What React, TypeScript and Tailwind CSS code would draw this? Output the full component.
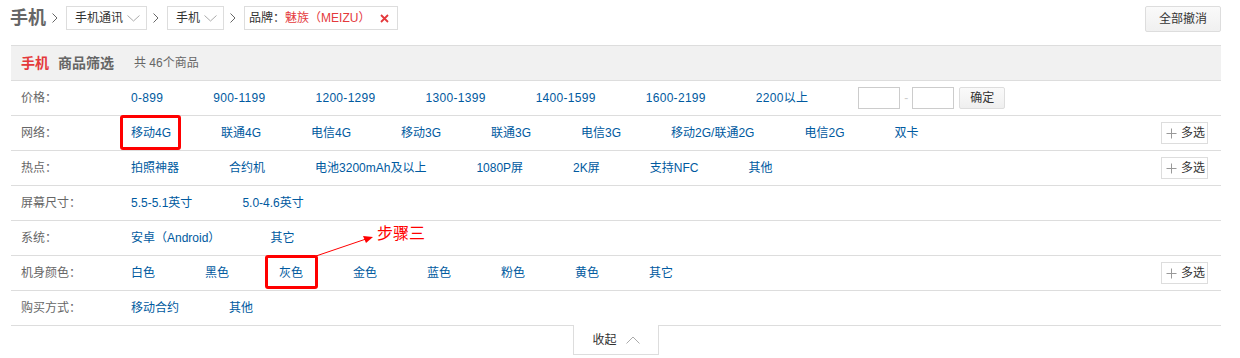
import React from 'react'

const font = "font-['Liberation_Sans','Noto_Sans_CJK_SC',sans-serif]"

type Item = { text: string; boxed?: 'net' | 'color' }
type Row = { label: string; items: Item[]; multi?: boolean; price?: boolean }

const rows: Row[] = [
    { label: '价格：', price: true, items: ['0-899', '900-1199', '1200-1299', '1300-1399', '1400-1599', '1600-2199', '2200以上'].map((t) => ({ text: t })) },
    {
        label: '网络：',
        multi: true,
        items: [{ text: '移动4G', boxed: 'net' }, ...['联通4G', '电信4G', '移动3G', '联通3G', '电信3G', '移动2G/联通2G', '电信2G', '双卡'].map((t) => ({ text: t }))],
    },
    { label: '热点：', multi: true, items: ['拍照神器', '合约机', '电池3200mAh及以上', '1080P屏', '2K屏', '支持NFC', '其他'].map((t) => ({ text: t })) },
    { label: '屏幕尺寸：', items: ['5.5-5.1英寸', '5.0-4.6英寸'].map((t) => ({ text: t })) },
    { label: '系统：', items: ['安卓（Android）', '其它'].map((t) => ({ text: t })) },
    {
        label: '机身颜色：',
        multi: true,
        items: [{ text: '白色' }, { text: '黑色' }, { text: '灰色', boxed: 'color' }, ...['金色', '蓝色', '粉色', '黄色', '其它'].map((t) => ({ text: t }))],
    },
    { label: '购买方式：', items: ['移动合约', '其他'].map((t) => ({ text: t })) },
]

function Sep() {
    return (
        <svg width="6" height="10" viewBox="0 0 6 10" className="ml-[6px] mr-[8px] mt-[7px]">
            <polyline points="0.5,0.5 5,5 0.5,9.5" fill="none" stroke="#666" strokeWidth="1" />
        </svg>
    )
}

function ChevronDown() {
    return (
        <svg width="13" height="7" viewBox="0 0 13 7" className="ml-[4px]">
            <polyline points="0.5,0.5 6.5,6 12.5,0.5" fill="none" stroke="#aaa" strokeWidth="1" />
        </svg>
    )
}

function MultiButton() {
    return (
        <button className="ml-auto mr-[13px] flex h-[22px] w-[47px] items-center border border-[#ddd] bg-white pl-[4px] text-[12px] leading-[14px] text-[#333]">
            <svg width="11" height="11" viewBox="0 0 11 11">
                <path d="M5.5 0.5v10M0.5 5.5h10" stroke="#999" strokeWidth="1" />
            </svg>
            <span className="ml-[4px]">多选</span>
        </button>
    )
}

function RowView({ row, last }: { row: Row; last: boolean }) {
    return (
        <div className={`flex items-center pl-[10px] ${last ? 'h-[34px]' : 'h-[35px] border-b border-[#ddd]'}`}>
            <span className="w-[110px] shrink-0 text-[12px] leading-[16px] text-[#666]">{row.label}</span>
            <div className={`flex items-center gap-[50px] ${row.price ? 'tracking-[0.3px]' : ''}`}>
                {row.items.map((it) => (
                    <a key={it.text} className="relative whitespace-nowrap text-[12px] leading-[16px] text-[#005aa0]">
                        {it.text}
                        {it.boxed === 'net' && (
                            <span className="absolute -left-[11px] -right-[10px] -top-[10px] -bottom-[9px] rounded-[3px] border-[3px] border-[#f00]" />
                        )}
                        {it.boxed === 'color' && (
                            <span className="absolute -left-[14px] -right-[15px] -top-[10px] -bottom-[8px] rounded-[3px] border-[3px] border-[#f00]" />
                        )}
                    </a>
                ))}
            </div>
            {row.price && (
                <div className="ml-[50px] flex items-center">
                    <input className="h-[22px] w-[42px] border border-[#ccc] bg-white" />
                    <span className="mx-[4px] text-[12px] text-[#ccc]">-</span>
                    <input className="h-[22px] w-[42px] border border-[#ccc] bg-white" />
                    <button className="ml-[5px] h-[22px] w-[46px] rounded-[2px] border border-[#ddd] bg-gradient-to-b from-[#fafafa] to-[#efefef] text-[12px] text-[#333]">
                        确定
                    </button>
                </div>
            )}
            {row.multi && <MultiButton />}
        </div>
    )
}

export default function App() {
    return (
        <div className={`relative h-[358px] w-[1240px] bg-white ${font}`}>
            <div className="ml-[11px] w-[1210px]">
                <div className="flex h-[45px] items-start pt-[6px]">
                    <span className="-ml-[1px] text-[18px] font-bold leading-[24px] text-[#666]">手机</span>
                    <Sep />
                    <div className="flex h-[24px] items-center border border-[#ddd] pl-[8px] pr-[6px] text-[12px] text-[#333]">
                        手机通讯
                        <ChevronDown />
                    </div>
                    <Sep />
                    <div className="flex h-[24px] items-center border border-[#ddd] pl-[8px] pr-[6px] text-[12px] text-[#333]">
                        手机
                        <ChevronDown />
                    </div>
                    <Sep />
                    <div className="flex h-[24px] items-center border border-[#ddd] pl-[4px] pr-[8px] text-[12px] text-[#333]">
                        品牌：<span className="text-[#e4393c]">魅族（MEIZU）</span>
                        <svg width="9" height="9" viewBox="0 0 9 9" className="ml-[10px]">
                            <path d="M1 1l7 7M8 1l-7 7" stroke="#e4393c" strokeWidth="1.8" />
                        </svg>
                    </div>
                    <button className="ml-auto h-[26px] w-[76px] rounded-[2px] border border-[#ddd] bg-gradient-to-b from-[#fafafa] to-[#f0f0f0] text-[12px] text-[#333]">
                        全部撤消
                    </button>
                </div>

                <div className="flex h-[36px] items-center border-y border-[#ddd] bg-[#f1f1f1] pl-[10px]">
                    <span className="text-[14px] font-bold text-[#e4393c]">手机</span>
                    <span className="ml-[9px] text-[14px] font-bold text-[#666]">商品筛选</span>
                    <span className="ml-[20px] text-[12px] text-[#666]">共 46个商品</span>
                </div>

                {rows.map((r, i) => (
                    <RowView key={r.label} row={r} last={i === rows.length - 1} />
                ))}

                <div className="flex">
                    <div className="flex-1 border-t border-[#ddd]" />
                    <div className="flex h-[30px] w-[86px] items-center justify-center border-x border-b border-[#ddd] text-[12px] text-[#333]">
                        收起
                        <svg width="14" height="8" viewBox="0 0 14 8" className="ml-[9px]">
                            <polyline points="0.5,7.5 7,1 13.5,7.5" fill="none" stroke="#aaa" strokeWidth="1" />
                        </svg>
                    </div>
                    <div className="flex-1 border-t border-[#ddd]" />
                </div>
            </div>

            <svg width="70" height="40" viewBox="0 0 70 40" className="absolute left-[310px] top-[225px]">
                <line x1="6" y1="31" x2="56" y2="14" stroke="#f00" strokeWidth="1" />
                <polygon points="63,12 53,11 56,18" fill="#f00" />
            </svg>
            <span className="absolute left-[377px] top-[225px] text-[16px] leading-[18px] text-[#f00]">步骤三</span>
        </div>
    )
}
